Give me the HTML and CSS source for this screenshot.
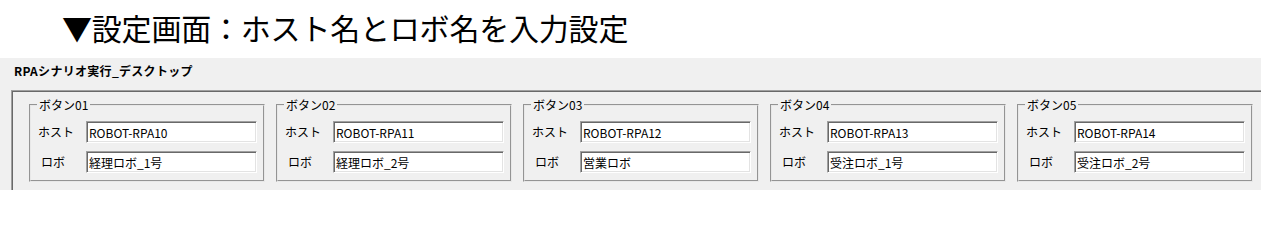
FILE: index.html
```html
<!DOCTYPE html>
<html lang="ja">
<head>
  <meta charset="UTF-8" />
  <meta name="viewport" content="width=device-width, initial-scale=1" />
  <title>設定画面</title>
  <link rel="stylesheet" href="styles.css">
</head>
<body>
  <h1 class="caption">▼設定画面：ホスト名とロボ名を入力設定</h1>

  <div class="window">
    <div class="window-title">RPAシナリオ実行_デスクトップ</div>
    <div class="frame">
      <fieldset class="group">
        <legend>ボタン01</legend>
        <div class="row"><label>ホスト</label><input type="text" value="ROBOT-RPA10" /></div>
        <div class="row"><label class="short">ロボ</label><input type="text" value="経理ロボ_1号" /></div>
      </fieldset>
      <fieldset class="group">
        <legend>ボタン02</legend>
        <div class="row"><label>ホスト</label><input type="text" value="ROBOT-RPA11" /></div>
        <div class="row"><label class="short">ロボ</label><input type="text" value="経理ロボ_2号" /></div>
      </fieldset>
      <fieldset class="group">
        <legend>ボタン03</legend>
        <div class="row"><label>ホスト</label><input type="text" value="ROBOT-RPA12" /></div>
        <div class="row"><label class="short">ロボ</label><input type="text" value="営業ロボ" /></div>
      </fieldset>
      <fieldset class="group">
        <legend>ボタン04</legend>
        <div class="row"><label>ホスト</label><input type="text" value="ROBOT-RPA13" /></div>
        <div class="row"><label class="short">ロボ</label><input type="text" value="受注ロボ_1号" /></div>
      </fieldset>
      <fieldset class="group">
        <legend>ボタン05</legend>
        <div class="row"><label>ホスト</label><input type="text" value="ROBOT-RPA14" /></div>
        <div class="row"><label class="short">ロボ</label><input type="text" value="受注ロボ_2号" /></div>
      </fieldset>
    </div>
  </div>
</body>
</html>
```

FILE: styles.css
```css
body {
  margin: 0;
  font-family: "Noto Sans CJK JP", "Noto Sans", sans-serif;
  background: #fff;
  color: #000;
}
.caption {
  margin: 0;
  height: 58px;
  line-height: 54px;
  padding-left: 62px;
  font-size: 30px;
  font-weight: 400;
  letter-spacing: -0.2px;
}
/* Windows form area, cut off at the bottom like the capture */
.window {
  height: 132px;
  overflow: hidden;
  background: #f0f0f0;
  padding: 5px 0 0 11px;
  box-sizing: border-box;
}
.window-title {
  font-size: 12px;
  font-weight: 700;
  line-height: 16px;
  padding-left: 3px;
  margin-bottom: 11px;
  letter-spacing: 0.3px;
}
.frame {
  display: flex;
  gap: 11px;
  border-top: 1px solid #a0a0a0;
  border-left: 1px solid #a0a0a0;
  box-shadow: inset 1px 1px 0 #696969;
  padding: 6px 0 20px 17px;
}
.group {
  flex: none;
  width: 236px;
  min-inline-size: 0;
  box-sizing: border-box;
  margin: 0;
  padding: 8px 6px 7px 7px;
  border: 2px groove #e8e8e8;
  display: flex;
  flex-direction: column;
  gap: 8px;
}
.group legend {
  font-size: 12px;
  line-height: 16px;
  padding: 0 2px;
  margin-left: -1px;
}
.row {
  display: flex;
  align-items: center;
}
.row label {
  width: 48px;
  flex: none;
  font-size: 12px;
  line-height: 16px;
}
.row label.short {
  padding-left: 3px;
  width: 45px;
}
.row input {
  width: 172px;
  height: 22px;
  box-sizing: border-box;
  margin: 0;
  padding: 1px 2px 0;
  font-family: "Noto Sans CJK JP", "Noto Sans", sans-serif;
  font-size: 12px;
  color: #000;
  background: #fff;
  border: 1px solid;
  border-color: #a0a0a0 #fff #fff #a0a0a0;
  box-shadow: inset 1px 1px 0 #696969, inset -1px -1px 0 #e3e3e3;
  outline: none;
}
```
